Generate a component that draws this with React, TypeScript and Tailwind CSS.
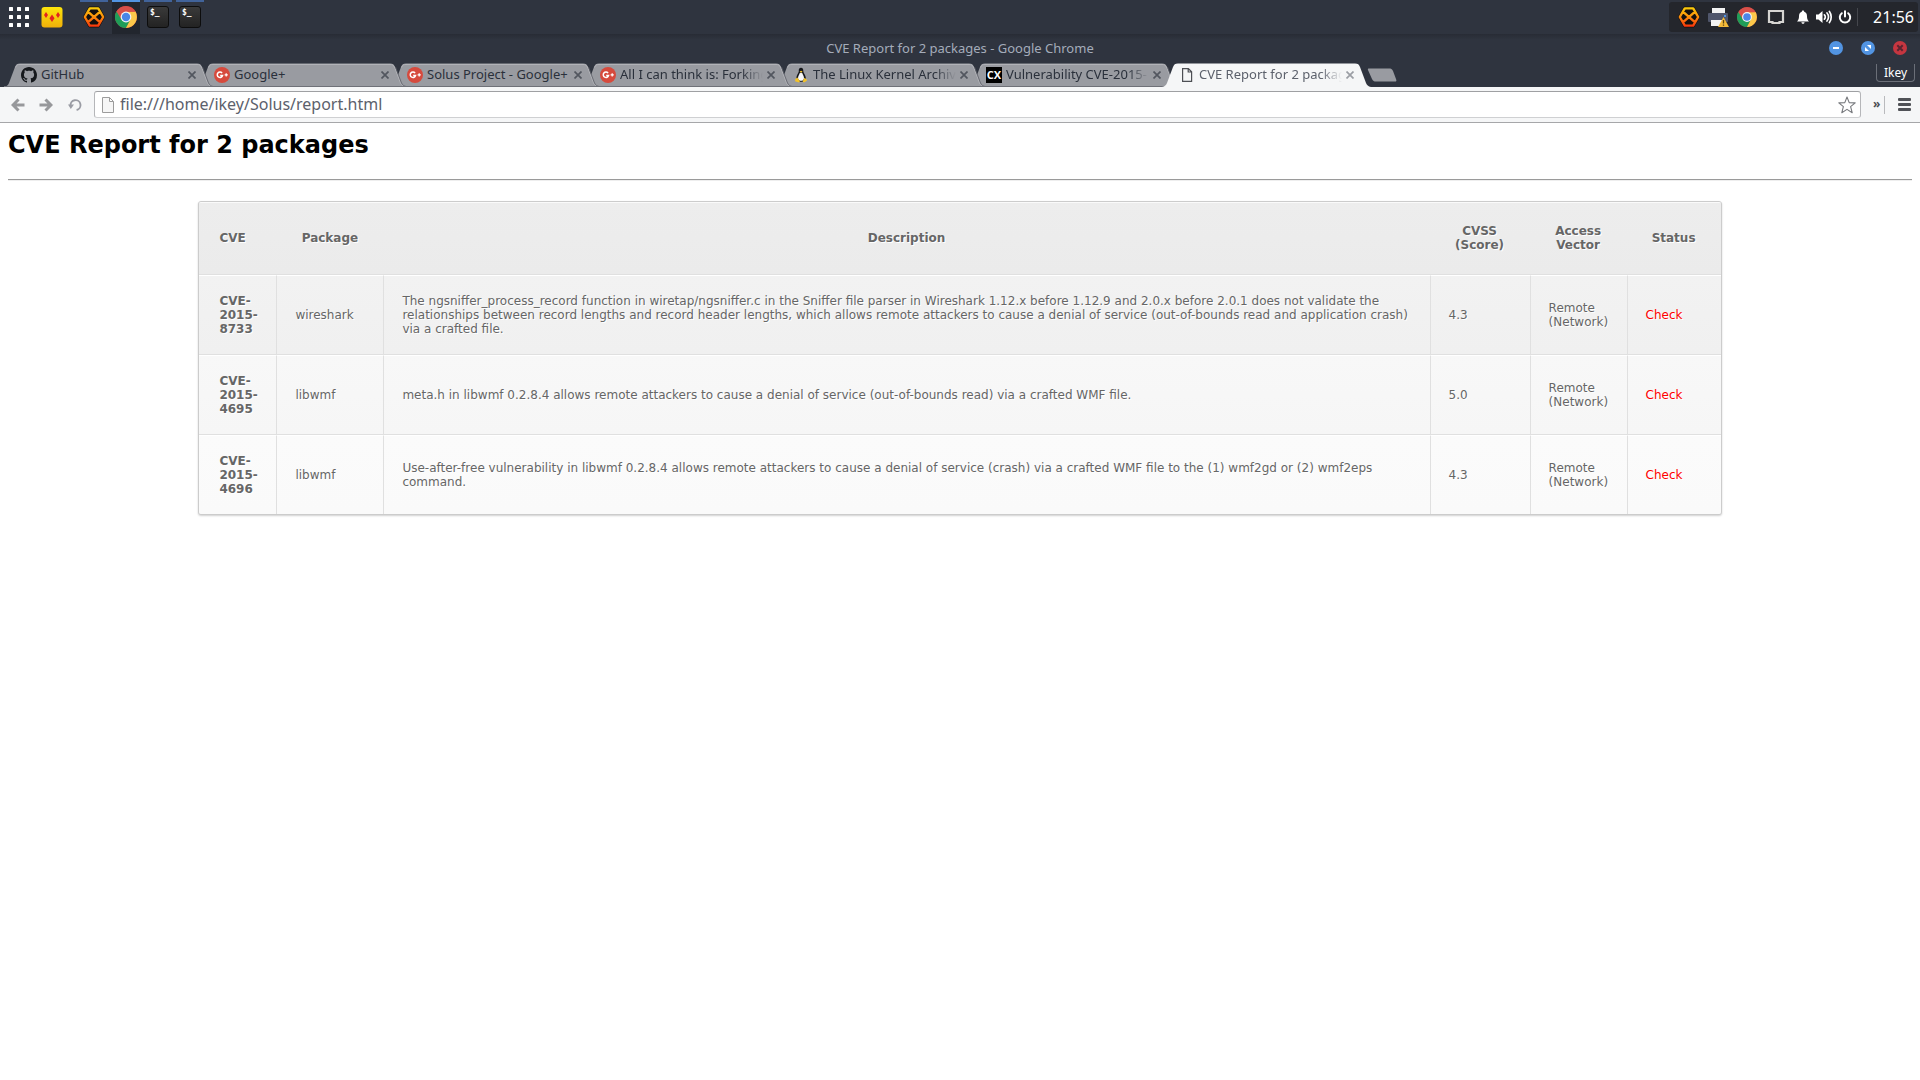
import React, { useState } from 'react';
import clsx from 'clsx';

type Favicon = 'github' | 'gplus' | 'tux' | 'cx' | 'file';

const tabs: { title: string; icon: Favicon; stack: string }[] = [
  { title: 'GitHub', icon: 'github', stack: 'z-[6]' },
  { title: 'Google+', icon: 'gplus', stack: 'z-[5]' },
  { title: 'Solus Project - Google+', icon: 'gplus', stack: 'z-[4]' },
  { title: 'All I can think is: Forking', icon: 'gplus', stack: 'z-[3]' },
  { title: 'The Linux Kernel Archives', icon: 'tux', stack: 'z-[2]' },
  { title: 'Vulnerability CVE-2015-', icon: 'cx', stack: 'z-[1]' },
  { title: 'CVE Report for 2 packages', icon: 'file', stack: 'z-[1]' },
];

const report = [
  {
    id: 'CVE-2015-8733',
    pkg: 'wireshark',
    description:
      'The ngsniffer_process_record function in wiretap/ngsniffer.c in the Sniffer file parser in Wireshark 1.12.x before 1.12.9 and 2.0.x before 2.0.1 does not validate the relationships between record lengths and record header lengths, which allows remote attackers to cause a denial of service (out-of-bounds read and application crash) via a crafted file.',
    score: '4.3',
    vector: 'Remote (Network)',
    status: 'Check',
    bg: 'from-[#f2f2f2] to-[#f0f0f0]',
  },
  {
    id: 'CVE-2015-4695',
    pkg: 'libwmf',
    description:
      'meta.h in libwmf 0.2.8.4 allows remote attackers to cause a denial of service (out-of-bounds read) via a crafted WMF file.',
    score: '5.0',
    vector: 'Remote (Network)',
    status: 'Check',
    bg: 'from-[#f8f8f8] to-[#f6f6f6]',
  },
  {
    id: 'CVE-2015-4696',
    pkg: 'libwmf',
    description:
      'Use-after-free vulnerability in libwmf 0.2.8.4 allows remote attackers to cause a denial of service (crash) via a crafted WMF file to the (1) wmf2gd or (2) wmf2eps command.',
    score: '4.3',
    vector: 'Remote (Network)',
    status: 'Check',
    bg: 'from-[#fbfbfb] to-[#fafafa]',
  },
];

function ChromeIcon({ className }: { className?: string }) {
  return (
    <svg viewBox="0 0 22 22" className={className}>
      <circle cx="11" cy="11" r="11" fill="#d8433b" />
      <path d="M11 11 L1.47 5.5 A11 11 0 0 0 11 22 L15.8 13.7 Z" fill="#1f9d58" />
      <path d="M11 22 A11 11 0 0 0 20.5 5.6 L11 5.9 L15.4 13.6 Z" fill="#fcc84a" />
      <path d="M1.47 5.5 A11 11 0 0 1 20.5 5.8 L11 5.8 L6.4 13.6 Z" fill="#d8504a" />
      <circle cx="11" cy="11" r="5.4" fill="#f4f4f4" />
      <circle cx="11" cy="11" r="4.2" fill="#4a86e8" />
    </svg>
  );
}

function HexChatIcon({ className }: { className?: string }) {
  return (
    <svg viewBox="0 0 22 22" className={className}>
      <defs>
        <linearGradient id="hex" gradientUnits="userSpaceOnUse" x1="0" y1="1" x2="0" y2="21">
          <stop offset="0" stopColor="#fbd10b" />
          <stop offset="0.5" stopColor="#fb8c0b" />
          <stop offset="1" stopColor="#f9300c" />
        </linearGradient>
      </defs>
      <path d="M6 1 H16 L21.6 11 L16 21 H6 L0.4 11 Z" fill="#14110f" stroke="#14110f" strokeLinejoin="round" />
      <path
        d="M6.8 2.4 H15.2 L20.2 11 L15.2 19.6 H6.8 L1.8 11 Z M4.6 5.4 L17.4 16.6 M17.4 5.4 L4.6 16.6"
        fill="none"
        stroke="url(#hex)"
        strokeWidth="2.4"
        strokeLinejoin="round"
      />
    </svg>
  );
}

function TerminalIcon() {
  return (
    <span className="flex h-[22px] w-[22px] items-start rounded-[3px] border border-[#0d0d0d] bg-linear-to-b from-[#3a3a3a] to-[#232323] pt-px pl-[2px] font-['DejaVu_Sans_Mono',monospace] text-[8px] leading-[10px] font-bold text-white">
      $_
    </span>
  );
}

function TabIcon({ icon }: { icon: Favicon }) {
  if (icon === 'github') {
    return (
      <svg viewBox="0 0 16 16" className="h-4 w-4" fill="#16181c">
        <path d="M8 0C3.58 0 0 3.58 0 8c0 3.54 2.29 6.53 5.47 7.59.4.07.55-.17.55-.38 0-.19-.01-.82-.01-1.49-2.01.37-2.53-.49-2.69-.94-.09-.23-.48-.94-.82-1.13-.28-.15-.68-.52-.01-.53.63-.01 1.08.58 1.23.82.72 1.21 1.87.87 2.33.66.07-.52.28-.87.51-1.07-1.78-.2-3.64-.89-3.64-3.95 0-.87.31-1.59.82-2.15-.08-.2-.36-1.02.08-2.12 0 0 .67-.21 2.2.82.64-.18 1.32-.27 2-.27s1.36.09 2 .27c1.53-1.04 2.2-.82 2.2-.82.44 1.1.16 1.92.08 2.12.51.56.82 1.27.82 2.15 0 3.07-1.87 3.75-3.65 3.95.29.25.54.73.54 1.48 0 1.07-.01 1.93-.01 2.2 0 .21.15.46.55.38A8.01 8.01 0 0 0 16 8c0-4.42-3.58-8-8-8z" />
      </svg>
    );
  }
  if (icon === 'gplus') {
    return (
      <svg viewBox="0 0 16 16" className="h-4 w-4">
        <circle cx="8" cy="8" r="8" fill="#d64a3d" />
        <path d="M8.1 6.1 A2.7 2.7 0 1 0 8.6 8.4 H6.2" fill="none" stroke="#fff" strokeWidth="1.5" />
        <path d="M12.2 6.2 V9.4 M10.6 7.8 H13.8" stroke="#fff" strokeWidth="1.2" />
      </svg>
    );
  }
  if (icon === 'tux') {
    return (
      <svg viewBox="0 0 16 16" className="h-4 w-4">
        <path d="M8 0.8 C6.2 0.8 5.6 2.2 5.8 4.4 C5.6 6.2 3.4 8 3.4 11 C3.6 14 5.4 14.8 8 14.8 C10.6 14.8 12.6 14 12.8 11 C12.8 8 10.4 6.2 10.3 4.2 C10.4 2.2 9.8 0.8 8 0.8 Z" fill="#15171b" />
        <path d="M8 5.4 C6.6 6 5 9 5 11.2 C5.4 13.4 6.6 13.8 8 13.8 C9.6 13.8 11 13.2 11 11 C11 9 9.4 6 8 5.4 Z" fill="#f7f7f7" />
        <path d="M6.6 4.4 L8.1 3.8 L9.6 4.5 L8.1 5.7 Z M4.4 10.6 L7 14.2 L6 15.4 L2 14.3 L2.4 12 Z M11.4 10.8 L14 12.8 L13.8 13.8 L11 15.4 L9.6 14.6 Z" fill="#f2c22a" />
      </svg>
    );
  }
  if (icon === 'cx') {
    return (
      <span className="flex h-4 w-4 items-center justify-center bg-black font-['Open_Sans',sans-serif] text-[11px] leading-4 font-bold text-white">
        CX
      </span>
    );
  }
  return (
    <svg viewBox="0 0 16 16" className="h-4 w-4" fill="none" stroke="#4d4f54" strokeWidth="1.2">
      <path d="M3.6 1.6 H9.4 L12.6 4.8 V14.4 H3.6 Z M9.2 1.8 V5 H12.4" />
    </svg>
  );
}

function TabShape({ active }: { active: boolean }) {
  return (
    <svg viewBox="0 0 209 24" preserveAspectRatio="none" className="absolute inset-0 h-full w-full">
      <path
        d="M0 24 C3 23.5 4 22 5 20 L11 4 C12 1.5 13 0.5 16 0.5 H193 C196 0.5 197 1.5 198 4 L204 20 C205 22 206 23.5 209 24 Z"
        fill={active ? '#f5f6f7' : '#999ba1'}
      />
      {!active && (
        <>
          <path d="M11.5 4.5 C12.5 2 13.5 1.5 16 1.5 H193 C195.5 1.5 196.5 2 197.5 4.5" fill="none" stroke="#b1b2b7" />
          <path d="M197.5 4 L203.5 20 C204.5 22 206 23.5 209 24" fill="none" stroke="#b1b2b7" />
          <path d="M198.5 4 L204.5 20 C205.5 22 207 23 209 23.5" fill="none" stroke="#5d6068" strokeWidth="0.8" />
          <path d="M0 23.5 H209" stroke="#6f7178" />
        </>
      )}
    </svg>
  );
}

function CloseGlyph() {
  return (
    <svg viewBox="0 0 8 8" className="h-2 w-2" stroke="currentColor" strokeWidth="1.7">
      <path d="M0.5 0.5 L7.5 7.5 M7.5 0.5 L0.5 7.5" />
    </svg>
  );
}

function Panel() {
  return (
    <header className="flex h-[34px] justify-between bg-[#2f343f] pr-[2px] text-white">
      <div className="flex">
        <button aria-label="Applications" className="ml-[9px] w-5">
          <svg viewBox="0 0 20 20" className="h-5 w-5" fill="#fff">
            {[0, 8, 16].map((y) =>
              [0, 8, 16].map((x) => <rect key={`${x}_${y}`} x={x} y={y} width="4" height="4" rx="0.5" />)
            )}
          </svg>
        </button>
        <button aria-label="Launcher" className="ml-3 w-[22px]">
          <svg viewBox="0 0 22 22" className="h-[22px] w-[22px]">
            <defs>
              <linearGradient id="yellow" x1="0" y1="0" x2="0" y2="1">
                <stop offset="0" stopColor="#fde50b" />
                <stop offset="1" stopColor="#f0b00a" />
              </linearGradient>
            </defs>
            <rect x="0.5" y="1" width="21" height="20.5" rx="3" fill="url(#yellow)" />
            <path d="M5 6 L7 9 L5 12 L3 9 Z M17 6 L19 9 L17 12 L15 9 Z M11 8.5 L13.5 12.2 L11 16 L8.5 12.2 Z" fill="#e2231f" />
          </svg>
        </button>
        <nav className="ml-[17px] flex gap-1">
          <button aria-label="HexChat" className="flex w-7 justify-center border-t-2 border-[#41639a] pt-1">
            <HexChatIcon className="h-[22px] w-[22px]" />
          </button>
          <button aria-label="Google Chrome" className="flex w-7 justify-center border-t-2 border-[#5294e2] bg-[#22262e] pt-1">
            <ChromeIcon className="h-[22px] w-[22px]" />
          </button>
          <button aria-label="Terminal" className="flex w-7 justify-center border-t-2 border-[#41639a] pt-1">
            <TerminalIcon />
          </button>
          <button aria-label="Terminal" className="flex w-7 justify-center border-t-2 border-[#41639a] pt-1">
            <TerminalIcon />
          </button>
        </nav>
      </div>

      <div className="my-[2px] flex items-center rounded-[3px] bg-[#24262c] pr-1 pl-[9px]">
        <div className="flex items-center gap-[7px]">
          <HexChatIcon className="h-[22px] w-[22px]" />
          <svg viewBox="0 0 22 22" className="h-[22px] w-[22px]">
            <rect x="5" y="2" width="13" height="6" fill="#f2f2f2" />
            <rect x="1" y="7" width="20" height="9" rx="1" fill="#50566b" />
            <rect x="4" y="14" width="14" height="6" fill="#f2f2f2" />
            <rect x="17" y="9" width="2" height="2" fill="#5294e2" />
            <path d="M16.5 11 L22 21 H11 Z" fill="#f4bb3a" />
            <path d="M16.5 14 V17.5 M16.5 18.5 V19.8" stroke="#5d4612" strokeWidth="1.3" />
          </svg>
          <ChromeIcon className="h-[22px] w-[22px] p-px" />
          <svg viewBox="0 0 22 22" className="h-[22px] w-[22px]" fill="none" stroke="#d6d5d2" strokeWidth="2.2">
            <path d="M4 5 H18 V16 H14.5 V17 H7.5 V16 H4 Z" />
          </svg>
        </div>
        <div className="ml-2 flex items-center gap-1">
          <svg viewBox="0 0 16 16" className="h-4 w-4" fill="#fff">
            <path d="M8 1.5 C7.2 1.5 6.8 2 6.8 2.7 C4.6 3.4 4 5 4 7.2 C4 10 3.4 10.8 2 12.5 H14 C12.6 10.8 12 10 12 7.2 C12 5 11.4 3.4 9.2 2.7 C9.2 2 8.8 1.5 8 1.5 Z M6.4 13.2 H9.6 C9.4 14.5 8.8 14.8 8 14.8 C7.2 14.8 6.6 14.5 6.4 13.2 Z" />
          </svg>
          <svg viewBox="0 0 16 16" className="h-4 w-[18px]" fill="none" stroke="#fff" strokeWidth="1.7" strokeLinecap="round">
            <path d="M0 5.5 H2.5 L6.5 2 V14 L2.5 10.5 H0 Z" fill="#fff" stroke="none" />
            <path d="M8.4 5.8 C9.6 7 9.6 9 8.4 10.2 M11 4 C13 6.2 13 9.8 11 12 M13.4 2.4 C15.8 5.6 15.8 10.4 13.4 13.6" />
          </svg>
          <svg viewBox="0 0 16 16" className="h-4 w-4" fill="none" stroke="#fff" strokeWidth="2" strokeLinecap="round">
            <path d="M8 2.2 V7.5 M4.8 4.2 A5.2 5.2 0 1 0 11.2 4.2" />
          </svg>
        </div>
        <span className="ml-1 h-[18px] w-px bg-[#45474d]" />
        <time className="ml-[15px] font-['Noto_Sans',sans-serif] text-base leading-none">21:56</time>
      </div>
    </header>
  );
}

function TitleBar() {
  return (
    <div className="relative flex h-7 items-center justify-center bg-linear-to-b from-[#282c35] to-[#2f343f] to-20%">
      <span className="font-['Noto_Sans',sans-serif] text-[13px] leading-4 text-[#a4acba]">
        CVE Report for 2 packages - Google Chrome
      </span>
      <div className="absolute right-[13px] flex gap-[18px]">
        <button aria-label="Minimize" className="flex h-[14px] w-[14px] items-center justify-center rounded-full bg-[#5294e2]">
          <span className="h-[2px] w-[6px] bg-white" />
        </button>
        <button aria-label="Restore" className="h-[14px] w-[14px] rounded-full bg-[#5294e2]">
          <svg viewBox="0 0 14 14" className="h-[14px] w-[14px]" fill="#fff">
            <path d="M6 4 H10 V8 Z M4 6 V10 H8 Z" />
          </svg>
        </button>
        <button aria-label="Close" className="flex h-[14px] w-[14px] items-center justify-center rounded-full bg-[#c53640]">
          <svg viewBox="0 0 14 14" className="h-[14px] w-[14px]" stroke="#5a2430" strokeWidth="2">
            <path d="M4.3 4.3 L9.7 9.7 M9.7 4.3 L4.3 9.7" />
          </svg>
        </button>
      </div>
    </div>
  );
}

export default function App() {
  const [activeTab, setActiveTab] = useState<number>(6);
  const [url, setUrl] = useState<string>('file:///home/ikey/Solus/report.html');

  return (
    <div className="min-h-screen bg-white">
      <Panel />
      <TitleBar />

      {/* tab strip */}
      <div className="flex items-start justify-between bg-[#2f343f] pr-[5px]">
        <div className="flex pt-px pl-5">
          {tabs.map((tab, i) => (
            <div
              key={`tab_${i}`}
              className={clsx(
                'relative -ml-4 flex h-6 w-[209px] items-center pl-[17px]',
                i === activeTab ? 'z-10' : tab.stack
              )}
            >
              <TabShape active={i === activeTab} />
              <button
                className="relative flex items-center gap-1 text-left"
                onClick={() => setActiveTab(i)}
              >
                <TabIcon icon={tab.icon} />
                <span
                  className={clsx(
                    "w-[143px] overflow-hidden pb-[2px] font-['Noto_Sans',sans-serif] text-[13px] leading-4 whitespace-nowrap",
                    i === activeTab ? 'text-[#5c616c]' : 'text-[#2a303b]',
                    i > 2 && 'mask-r-from-85% mask-r-to-100%'
                  )}
                >
                  {tab.title}
                </span>
              </button>
              <button
                aria-label="Close tab"
                className={clsx('relative ml-1', i === activeTab ? 'text-[#9b9ea4]' : 'text-[#52565f]')}
              >
                <CloseGlyph />
              </button>
            </div>
          ))}
          <button aria-label="New tab" className="-ml-1 h-6">
            <svg viewBox="0 0 30 14" className="h-[14px] w-[30px]">
              <path d="M2 0.5 H22 C24 0.5 25 1 26 3 L29 11 C29.8 13 29.4 13.5 28 13.5 H9 C7 13.5 6 13 5 11 L1 2 C0.6 1 1 0.5 2 0.5 Z" fill="#999ba1" />
            </svg>
          </button>
        </div>
        <button className="mt-[2px] h-[18px] w-[39px] rounded-b-[4px] border border-t-0 border-[#6b6f78] font-['Noto_Sans',sans-serif] text-xs leading-4 text-white">
          Ikey
        </button>
      </div>

      {/* toolbar */}
      <div className="flex h-9 items-center border-b border-[#a6a7a9] bg-[#f5f6f7] pr-[9px] pl-[11px]">
        <button aria-label="Back">
          <svg viewBox="0 0 14 14" className="h-[14px] w-[14px]" fill="none" stroke="#97989b" strokeWidth="3">
            <path d="M7.5 1.5 L2 7 L7.5 12.5 M2 7 H13.5" />
          </svg>
        </button>
        <button aria-label="Forward" className="ml-[14px]">
          <svg viewBox="0 0 14 14" className="h-[14px] w-[14px]" fill="none" stroke="#97989b" strokeWidth="3">
            <path d="M6.5 1.5 L12 7 L6.5 12.5 M12 7 H0.5" />
          </svg>
        </button>
        <button aria-label="Reload" className="ml-[15px]">
          <svg viewBox="0 0 14 14" className="h-[14px] w-[14px]">
            <path d="M2.6 8 A5 5 0 1 1 8.6 12" fill="none" stroke="#9a9ca4" strokeWidth="1.9" />
            <path d="M0 6.5 H6 L2.8 11 Z" fill="#9a9ca4" />
          </svg>
        </button>
        <div className="ml-3 flex h-[27px] flex-1 items-center rounded-[3px] border border-[#b5b6b9] border-t-[#9fa0a3] border-b-[#cfd0d2] bg-white pr-1 pl-[7px]">
          <svg viewBox="0 0 12 16" className="h-4 w-3" fill="#f6f6f6" stroke="#9c9c9c">
            <path d="M0.5 0.5 H7.5 L11.5 4.5 V15.5 H0.5 Z M7.5 0.5 V4.5 H11.5" />
          </svg>
          <input
            aria-label="Address"
            className="ml-1.5 flex-1 bg-transparent pb-[2px] font-['Noto_Sans',sans-serif] text-base leading-5 text-[#5c616c] outline-none"
            value={url}
            onChange={(e) => setUrl(e.target.value)}
          />
          <button aria-label="Bookmark this page">
            <svg viewBox="0 0 18 18" className="h-[18px] w-[18px]" fill="none" stroke="#77797d" strokeWidth="1.1" strokeLinejoin="round">
              <path d="M9 1 L11.2 6.6 L17.2 6.9 L12.6 10.7 L14.2 16.7 L9 13.4 L3.8 16.7 L5.4 10.7 L0.8 6.9 L6.8 6.6 Z" />
            </svg>
          </button>
        </div>
        <button
          aria-label="More extensions"
          className="ml-3 h-[18px] w-3 border-r border-[#b9babd] pb-[2px] text-left font-['Noto_Sans',sans-serif] text-xs leading-4 font-bold text-[#4b4d52]"
        >
          »
        </button>
        <button aria-label="Menu" className="ml-[13px]">
          <svg viewBox="0 0 13 13" className="h-[13px] w-[13px]" fill="#505257">
            <rect y="0" width="13" height="3" rx="1" />
            <rect y="5" width="13" height="3" rx="1" />
            <rect y="10" width="13" height="3" rx="1" />
          </svg>
        </button>
      </div>

      {/* report.html */}
      <main className="p-2 font-['DejaVu_Sans',sans-serif] text-black">
        <h1 className="text-2xl leading-7 font-bold">CVE Report for 2 packages</h1>
        <hr className="my-5 border-t border-b border-t-[#9a9a9a] border-b-[#eeeeee]" />
        <table className="mx-auto w-4/5 table-fixed border-separate border-spacing-0 overflow-hidden rounded-[3px] border border-[#cccccc] bg-[#eaebec] text-xs leading-[14px] text-[#666666] shadow-[0_1px_2px_#d1d1d1] text-shadow-[1px_1px_0_#fff]">
          <thead>
            <tr className="*:border-t *:border-b *:border-t-[#fafafa] *:border-b-[#e0e0e0] *:bg-linear-to-b *:from-[#ededed] *:to-[#ebebeb] *:pt-[21px] *:pb-[22px]">
              <th className="w-[77px] pr-[25px] pl-5 text-left">CVE</th>
              <th className="w-[107px] px-[25px]">Package</th>
              <th className="px-[25px]">Description</th>
              <th className="w-[100px] px-[25px]">CVSS (Score)</th>
              <th className="w-[97px] px-[25px]">Access Vector</th>
              <th className="w-[94px] px-[25px]">Status</th>
            </tr>
          </thead>
          <tbody>
            {report.map((x, i) => {
              const cell = clsx(
                'border-t border-t-white bg-linear-to-b py-[18px] pr-[18px]',
                i < report.length - 1 && 'border-b border-b-[#e0e0e0]',
                x.bg
              );
              const inner = clsx(cell, 'border-l border-l-[#e0e0e0] pl-[18px]');
              return (
                <tr key={x.id}>
                  <td className={clsx(cell, 'pl-5')}>
                    <a href={`#${x.id}`} className="font-bold">
                      {x.id}
                    </a>
                  </td>
                  <td className={inner}>{x.pkg}</td>
                  <td className={inner}>{x.description}</td>
                  <td className={inner}>{x.score}</td>
                  <td className={inner}>{x.vector}</td>
                  <td className={clsx(inner, 'text-[#ff0000]')}>{x.status}</td>
                </tr>
              );
            })}
          </tbody>
        </table>
      </main>
    </div>
  );
}
